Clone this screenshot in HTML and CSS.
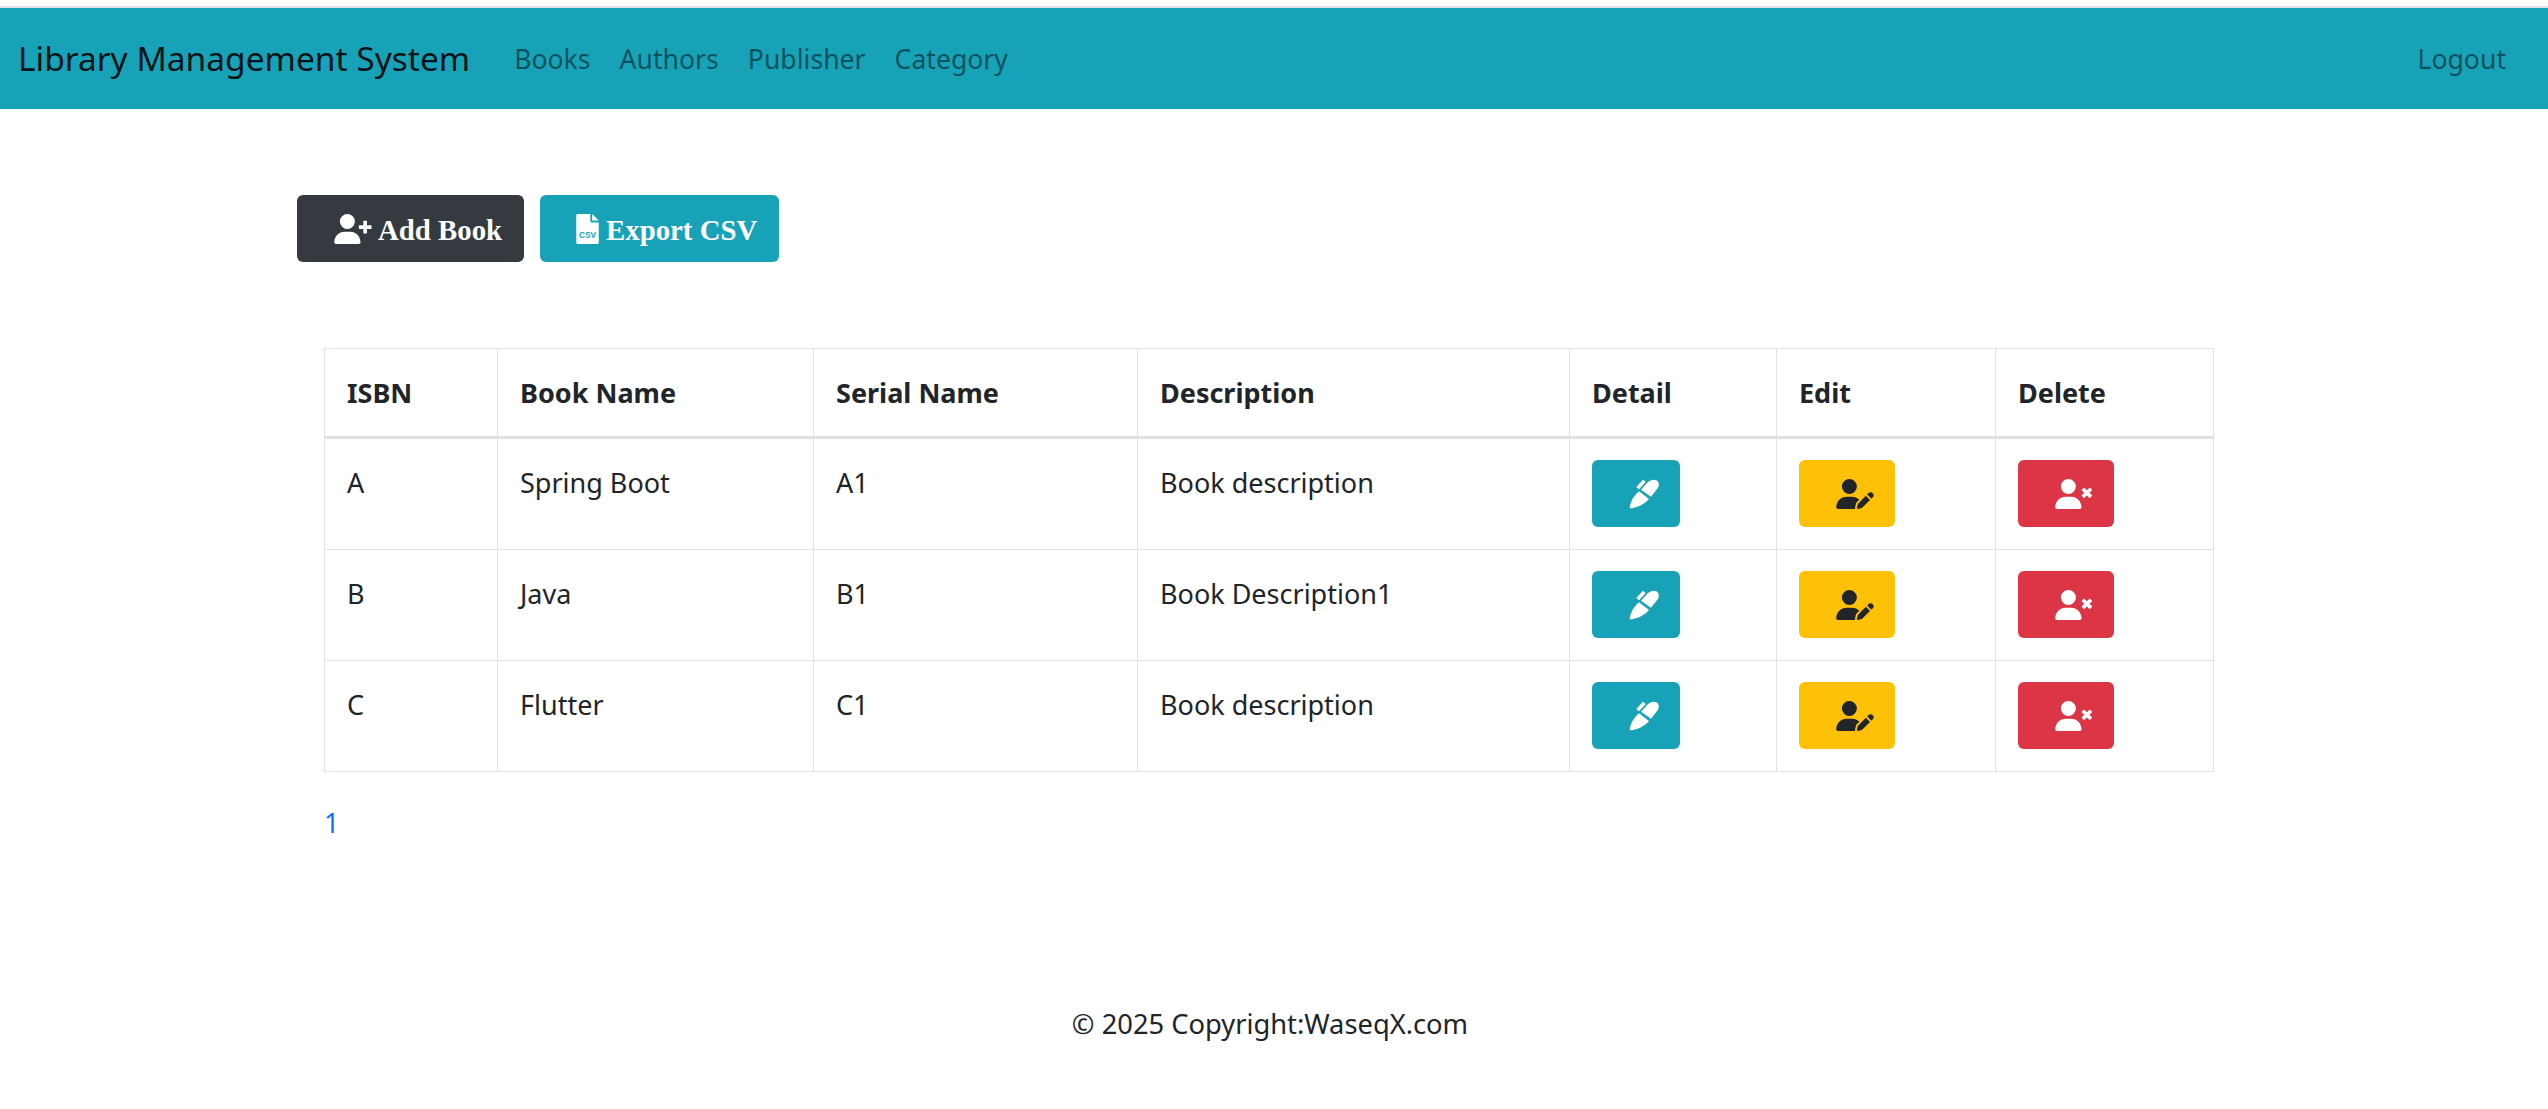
FILE: index.html
```html
<!DOCTYPE html>
<html lang="en">
<head>
    <meta charset="UTF-8">
    <title>Library Management System</title>
    <link rel="stylesheet" href="styles.css">
</head>
<body>
<nav class="navbar">
    <a class="brand" href="#">Library Management System</a>
    <a class="nav-link" href="#">Books</a>
    <a class="nav-link" href="#">Authors</a>
    <a class="nav-link" href="#">Publisher</a>
    <a class="nav-link" href="#">Category</a>
    <a class="nav-link logout" href="#">Logout</a>
</nav>

<div class="actions">
    <a class="btn btn-dark" href="#">
        <svg class="icon-user" viewBox="0 0 640 512"><path d="M96 128a128 128 0 1 1 256 0A128 128 0 1 1 96 128zM0 482.3C0 383.8 79.8 304 178.3 304h91.4C368.2 304 448 383.8 448 482.3c0 16.4-13.3 29.7-29.7 29.7H29.7C13.3 512 0 498.7 0 482.3z"/><path class="icon-stroke" d="M528 116V332M420 224H636"/></svg>
        <span class="btn-label">Add Book</span>
    </a>
    <a class="btn btn-info btn-export" href="#">
        <svg class="icon-file" viewBox="0 0 384 512"><path d="M24 0H240V128c0 9 7 16 16 16H384V488c0 13-11 24-24 24H24c-13 0-24-11-24-24V24C0 11 11 0 24 0z"/><path d="M272 0L384 112H272z"/><text class="csv-mark" x="192" y="410" text-anchor="middle" textLength="290" lengthAdjust="spacingAndGlyphs">CSV</text></svg>
        <span class="btn-label">Export CSV</span>
    </a>
</div>

<main class="content">
    <table class="book-table">
        <colgroup>
            <col class="col-isbn">
            <col class="col-name">
            <col class="col-serial">
            <col class="col-desc">
            <col class="col-detail">
            <col class="col-edit">
            <col class="col-delete">
        </colgroup>
        <thead>
        <tr>
            <th>ISBN</th>
            <th>Book Name</th>
            <th>Serial Name</th>
            <th>Description</th>
            <th>Detail</th>
            <th>Edit</th>
            <th>Delete</th>
        </tr>
        </thead>
        <tbody>
        <tr>
            <td>A</td>
            <td>Spring Boot</td>
            <td>A1</td>
            <td>Book description</td>
            <td><a class="btn-icon btn-info" href="#"><svg class="icon-pen" viewBox="0 0 90 90"><path d="M2 88C3 70 14 50 30 37L60 60C46 76 22 88 2 88z"/><path d="M36 32L52 14C60 5 72 -1 82 4C90 9 92 19 86 28L66 53z"/><path d="M22 24L42 2L50 9L30 31z"/></svg></a></td>
            <td><a class="btn-icon btn-warning" href="#"><svg class="icon-user" viewBox="0 0 640 512"><path d="M224 256A128 128 0 1 0 224 0a128 128 0 1 0 0 256zm-45.7 48C79.8 304 0 383.8 0 482.3C0 498.7 13.3 512 29.7 512H322.8c-3.1-8.8-3.7-18.4-1.4-27.8l15-60.1c2.8-11.3 8.6-21.5 16.8-29.7l40.3-40.3c-32.1-31-75.7-50.1-123.9-50.1H178.3zm435.5-68.3c-15.6-15.6-40.9-15.6-56.6 0l-29.4 29.4 71 71 29.4-29.4c15.6-15.6 15.6-40.9 0-56.6l-14.4-14.4zM375.9 417c-4.1 4.1-7 9.2-8.4 14.9l-15 60.1c-1.4 5.5 .2 11.2 4.2 15.2s9.7 5.6 15.2 4.2l60.1-15c5.6-1.4 10.8-4.3 14.9-8.4L576.1 358.7l-71-71L375.9 417z"/></svg></a></td>
            <td><a class="btn-icon btn-danger" href="#"><svg class="icon-user" viewBox="0 0 640 512"><path d="M96 128a128 128 0 1 1 256 0A128 128 0 1 1 96 128zM0 482.3C0 383.8 79.8 304 178.3 304h91.4C368.2 304 448 383.8 448 482.3c0 16.4-13.3 29.7-29.7 29.7H29.7C13.3 512 0 498.7 0 482.3z"/><path class="icon-stroke" d="M470 165L610 305M610 165L470 305"/></svg></a></td>
        </tr>
        <tr>
            <td>B</td>
            <td>Java</td>
            <td>B1</td>
            <td>Book Description1</td>
            <td><a class="btn-icon btn-info" href="#"><svg class="icon-pen" viewBox="0 0 90 90"><path d="M2 88C3 70 14 50 30 37L60 60C46 76 22 88 2 88z"/><path d="M36 32L52 14C60 5 72 -1 82 4C90 9 92 19 86 28L66 53z"/><path d="M22 24L42 2L50 9L30 31z"/></svg></a></td>
            <td><a class="btn-icon btn-warning" href="#"><svg class="icon-user" viewBox="0 0 640 512"><path d="M224 256A128 128 0 1 0 224 0a128 128 0 1 0 0 256zm-45.7 48C79.8 304 0 383.8 0 482.3C0 498.7 13.3 512 29.7 512H322.8c-3.1-8.8-3.7-18.4-1.4-27.8l15-60.1c2.8-11.3 8.6-21.5 16.8-29.7l40.3-40.3c-32.1-31-75.7-50.1-123.9-50.1H178.3zm435.5-68.3c-15.6-15.6-40.9-15.6-56.6 0l-29.4 29.4 71 71 29.4-29.4c15.6-15.6 15.6-40.9 0-56.6l-14.4-14.4zM375.9 417c-4.1 4.1-7 9.2-8.4 14.9l-15 60.1c-1.4 5.5 .2 11.2 4.2 15.2s9.7 5.6 15.2 4.2l60.1-15c5.6-1.4 10.8-4.3 14.9-8.4L576.1 358.7l-71-71L375.9 417z"/></svg></a></td>
            <td><a class="btn-icon btn-danger" href="#"><svg class="icon-user" viewBox="0 0 640 512"><path d="M96 128a128 128 0 1 1 256 0A128 128 0 1 1 96 128zM0 482.3C0 383.8 79.8 304 178.3 304h91.4C368.2 304 448 383.8 448 482.3c0 16.4-13.3 29.7-29.7 29.7H29.7C13.3 512 0 498.7 0 482.3z"/><path class="icon-stroke" d="M470 165L610 305M610 165L470 305"/></svg></a></td>
        </tr>
        <tr>
            <td>C</td>
            <td>Flutter</td>
            <td>C1</td>
            <td>Book description</td>
            <td><a class="btn-icon btn-info" href="#"><svg class="icon-pen" viewBox="0 0 90 90"><path d="M2 88C3 70 14 50 30 37L60 60C46 76 22 88 2 88z"/><path d="M36 32L52 14C60 5 72 -1 82 4C90 9 92 19 86 28L66 53z"/><path d="M22 24L42 2L50 9L30 31z"/></svg></a></td>
            <td><a class="btn-icon btn-warning" href="#"><svg class="icon-user" viewBox="0 0 640 512"><path d="M224 256A128 128 0 1 0 224 0a128 128 0 1 0 0 256zm-45.7 48C79.8 304 0 383.8 0 482.3C0 498.7 13.3 512 29.7 512H322.8c-3.1-8.8-3.7-18.4-1.4-27.8l15-60.1c2.8-11.3 8.6-21.5 16.8-29.7l40.3-40.3c-32.1-31-75.7-50.1-123.9-50.1H178.3zm435.5-68.3c-15.6-15.6-40.9-15.6-56.6 0l-29.4 29.4 71 71 29.4-29.4c15.6-15.6 15.6-40.9 0-56.6l-14.4-14.4zM375.9 417c-4.1 4.1-7 9.2-8.4 14.9l-15 60.1c-1.4 5.5 .2 11.2 4.2 15.2s9.7 5.6 15.2 4.2l60.1-15c5.6-1.4 10.8-4.3 14.9-8.4L576.1 358.7l-71-71L375.9 417z"/></svg></a></td>
            <td><a class="btn-icon btn-danger" href="#"><svg class="icon-user" viewBox="0 0 640 512"><path d="M96 128a128 128 0 1 1 256 0A128 128 0 1 1 96 128zM0 482.3C0 383.8 79.8 304 178.3 304h91.4C368.2 304 448 383.8 448 482.3c0 16.4-13.3 29.7-29.7 29.7H29.7C13.3 512 0 498.7 0 482.3z"/><path class="icon-stroke" d="M470 165L610 305M610 165L470 305"/></svg></a></td>
        </tr>
        </tbody>
    </table>

    <div class="pagination">
        <a href="#">1</a>
    </div>
</main>

<footer class="footer">© 2025 Copyright:WaseqX.com</footer>
</body>
</html>
```

FILE: styles.css
```css
/* General page styling */
body {
    font-family: 'Noto Sans', sans-serif;
    font-size: 27px;
    line-height: 43px;
    color: #212529;
    margin: 0;
    padding-top: 6px;
    background-color: white;
}

a {
    text-decoration: none;
}

.navbar {
    display: flex;
    align-items: center;
    height: 101px;
    padding: 0 42px 0 18px;
    border-top: 2px solid #dee2e6;
    background-color: #17a2b8;
}

.brand {
    font-size: 33.5px;
    color: rgba(0, 0, 0, 0.9);
    margin-right: 44px;
}

.nav-link {
    font-size: 26.6px;
    color: rgba(0, 0, 0, 0.5);
    margin-right: 29px;
    padding-top: 2px;
}

.logout {
    margin-left: auto;
    margin-right: 0;
}

.actions {
    display: flex;
    gap: 16px;
    margin: 86px 0 0 297px;
}

.btn {
    display: flex;
    align-items: center;
    height: 67px;
    padding: 0 22px 0 37px;
    box-sizing: border-box;
    border-radius: 6px;
    color: white;
    font-family: 'Liberation Serif', serif;
    font-size: 28.8px;
    font-weight: bold;
}

.btn-export {
    padding-left: 36px;
}

.btn-label {
    margin-left: 6px;
    padding-top: 3px;
}

.btn-export .btn-label {
    margin-left: 7px;
}

.btn-dark {
    background-color: #343a40;
}

.btn-info {
    background-color: #17a2b8;
    color: white;
}

.btn-warning {
    background-color: #ffc107;
    color: #212529;
}

.btn-danger {
    background-color: #dc3545;
    color: white;
}

.icon-user {
    width: 38px;
    height: 30px;
    fill: currentColor;
}

.icon-stroke {
    fill: none;
    stroke: currentColor;
    stroke-width: 62;
}

.icon-file {
    width: 23px;
    height: 30px;
    fill: white;
}

.csv-mark {
    fill: #17a2b8;
    font-family: 'Liberation Sans', sans-serif;
    font-size: 150px;
    font-weight: bold;
}

.icon-pen {
    width: 30px;
    height: 30px;
    fill: currentColor;
}

.content {
    margin: 86px 335px 0 324px;
}

.book-table {
    width: 100%;
    table-layout: fixed;
    border-collapse: collapse;
}

.col-isbn { width: 173px; }
.col-name { width: 316px; }
.col-serial { width: 324px; }
.col-desc { width: 432px; }
.col-detail { width: 207px; }
.col-edit { width: 219px; }
.col-delete { width: 218px; }

.book-table th,
.book-table td {
    padding: 22px;
    border: 1px solid #dee2e6;
    text-align: left;
    vertical-align: top;
}

.book-table td {
    padding-top: 21px;
    line-height: 45px;
}

.book-table thead th {
    font-weight: bold;
    border-bottom: 3px solid #dee2e6;
}

.btn-icon {
    display: inline-flex;
    align-items: center;
    height: 67px;
    padding: 0 21px 0 37px;
    box-sizing: border-box;
    border-radius: 6px;
    vertical-align: top;
}

.pagination {
    margin-top: 29px;
}

.pagination a {
    color: #0d6efd;
}

.footer {
    margin-top: 158px;
    padding-right: 8px;
    font-size: 27.3px;
    text-align: center;
}
```
